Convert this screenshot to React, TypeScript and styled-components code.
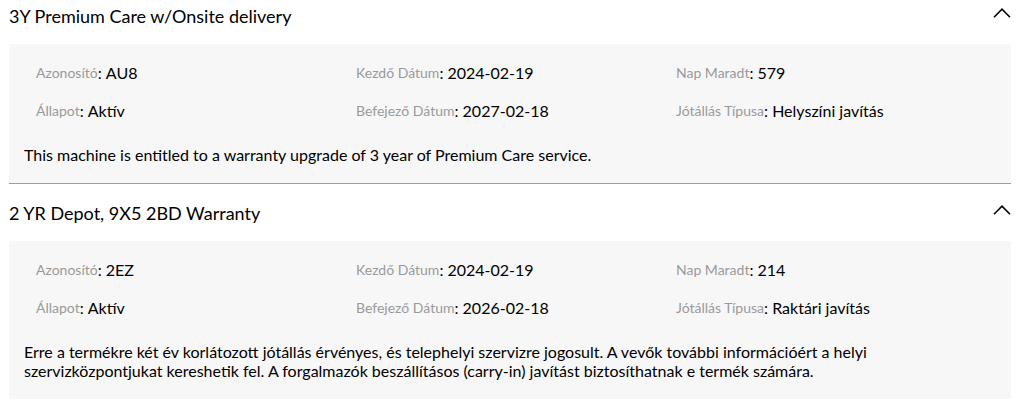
import React from 'react';
import styled, { createGlobalStyle } from 'styled-components';

type Warranty = {
  title: string;
  id: string;
  start: string;
  end: string;
  daysLeft: string;
  status: string;
  type: string;
  description: string;
};

const warranties: Warranty[] = [
  {
    title: '3Y Premium Care w/Onsite delivery',
    id: 'AU8',
    start: '2024-02-19',
    end: '2027-02-18',
    daysLeft: '579',
    status: 'Aktív',
    type: 'Helyszíni javítás',
    description:
      'This machine is entitled to a warranty upgrade of 3 year of Premium Care service.',
  },
  {
    title: '2 YR Depot, 9X5 2BD Warranty',
    id: '2EZ',
    start: '2024-02-19',
    end: '2026-02-18',
    daysLeft: '214',
    status: 'Aktív',
    type: 'Raktári javítás',
    description:
      'Erre a termékre két év korlátozott jótállás érvényes, és telephelyi szervizre jogosult. A vevők további információért a helyi szervizközpontjukat kereshetik fel. A forgalmazók beszállításos (carry-in) javítást biztosíthatnak e termék számára.',
  },
];

export default function App() {
  return (
    <>
      <GlobalStyle />
      <Page>
        {warranties.map((w) => (
          <Section key={w.title}>
            <Header>
              <Title>{w.title}</Title>
              <Chevron />
            </Header>
            <Panel>
              <Fields>
                <Field label="Azonosító" value={w.id} />
                <Field label="Kezdő Dátum" value={w.start} />
                <Field label="Nap Maradt" value={w.daysLeft} />
                <Field label="Állapot" value={w.status} />
                <Field label="Befejező Dátum" value={w.end} />
                <Field label="Jótállás Típusa" value={w.type} />
              </Fields>
              <Description>{w.description}</Description>
            </Panel>
          </Section>
        ))}
      </Page>
    </>
  );
}

function Field({ label, value }: { label: string; value: string }) {
  return (
    <FieldRow>
      <Label>{label}</Label>: <Value>{value}</Value>
    </FieldRow>
  );
}

function Chevron() {
  return (
    <ChevronSvg width="18" height="10" viewBox="0 0 18 10">
      <path d="M1 9.2 L9 1.2 L17 9.2" fill="none" stroke="#000" strokeWidth="1.6" />
    </ChevronSvg>
  );
}

const GlobalStyle = createGlobalStyle`
  body {
    margin: 0;
    background: #fff;
    font-family: Lato, "Open Sans", sans-serif;
    color: #000;
    overflow: hidden;
  }
`;

const Page = styled.div`
  width: 1002px;
  margin-left: 9px;
  margin-top: -13px;
`;

const Section = styled.div`
  & + & {
    border-top: 1px solid #9e9e9e;
  }
`;

const Header = styled.div`
  height: 57px;
  display: flex;
  align-items: center;
  justify-content: space-between;
`;

const Title = styled.h3`
  margin: 0;
  font-size: 18px;
  font-weight: 400;
`;

const ChevronSvg = styled.svg`
  display: block;
  margin-top: -6px;
`;

const Panel = styled.div`
  background: #f7f7f7;
  padding: 9px 15px 19px;
`;

const Fields = styled.div`
  display: grid;
  grid-template-columns: repeat(3, 320px);
  grid-auto-rows: 38px;
  padding-left: 12px;
`;

const FieldRow = styled.div`
  display: flex;
  align-items: center;
  white-space: pre;
  font-size: 16px;
`;

const Label = styled.span`
  color: #9a9a9a;
  font-size: 14px;
`;

const Value = styled.span`
  color: #000;
`;

const Description = styled.p`
  margin: 16px 0 0;
  font-size: 16px;
  line-height: 19px;
  max-width: 850px;
`;
